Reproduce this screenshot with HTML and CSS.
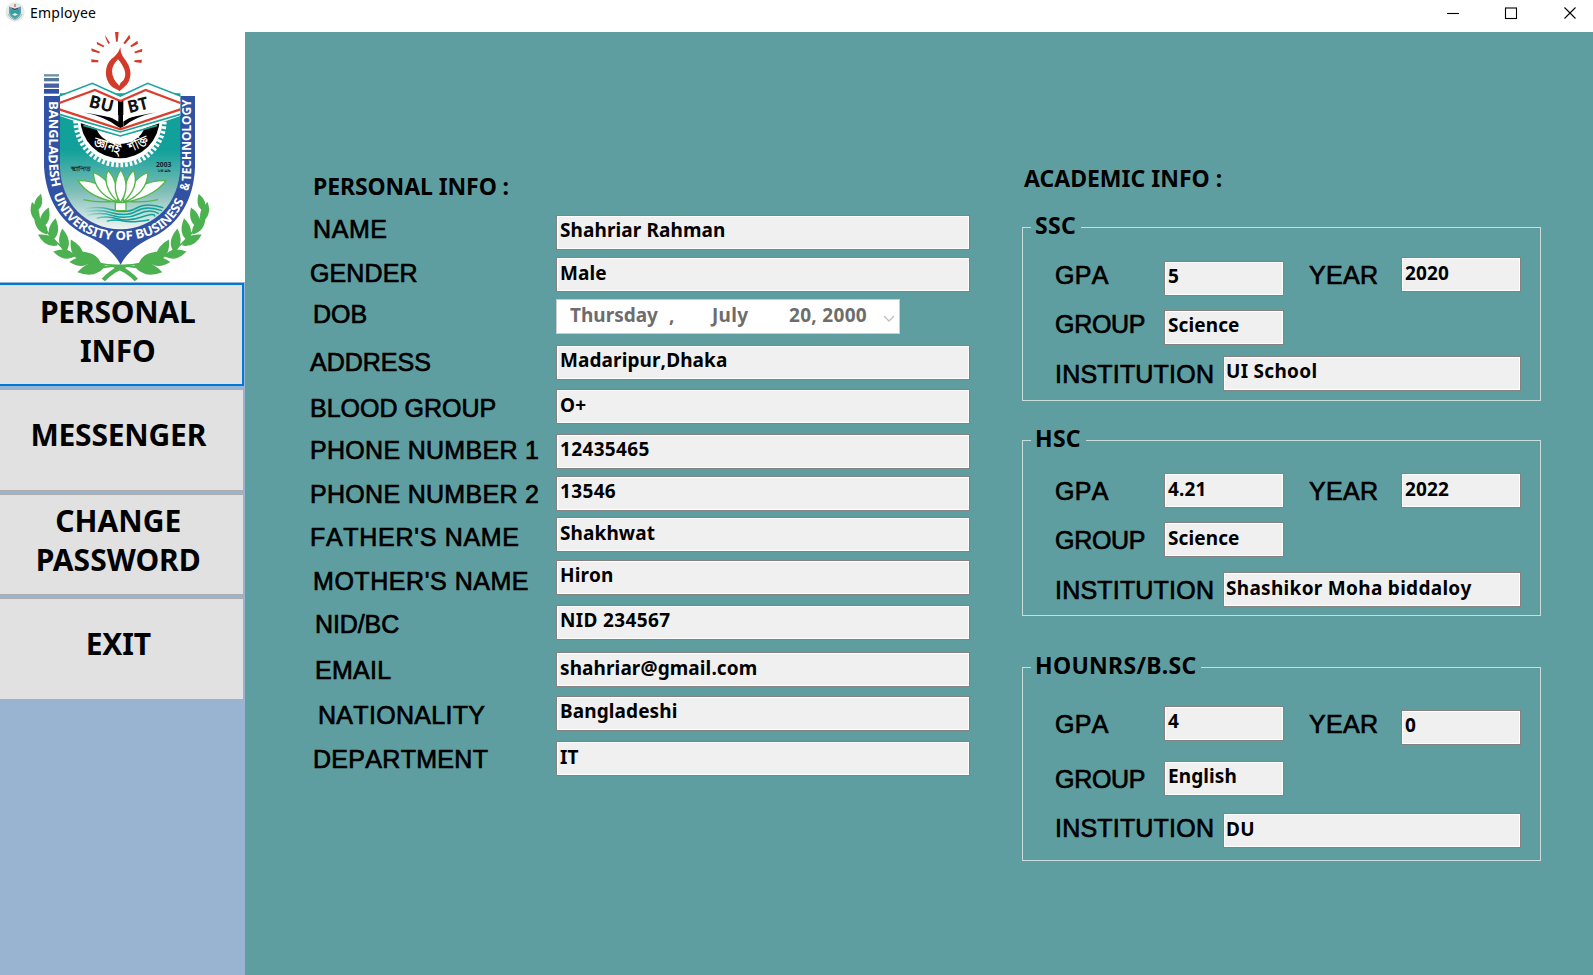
FILE: index.html
```html
<!DOCTYPE html>
<html lang="en">
<head>
<meta charset="utf-8">
<title>Employee</title>
<link rel="stylesheet" href="styles.css">
</head>
<body>
<header class="titlebar">
  <svg class="app-icon" viewBox="0 0 20 20"><circle cx="10" cy="10" r="9.700" fill="#e4ebea"/><path d="M4 4.500 5.500 5 10 6.500 16 4.500V11Q15 15 10 17.500 5 15 4 11Z" fill="#6a9ab4"/><path d="M5.500 7 10 9 14.500 7V11Q13 14 10 15 7 14 5.500 11Z" fill="#2fa39b"/><path d="M7 12.500 10 11 13 12.500 10 14Z" fill="#d5efe4"/><path d="M7 6.500 10 7.500 13 6.500" stroke="#39454a" fill="none"/><path d="M10 2V5" stroke="#d07060" stroke-width="1.500"/><path d="M3 12Q5 17 10 18 15 17 17 12" stroke="#8fc79a" fill="none"/></svg>
  <span class="app-title">Employee</span>
  <svg class="controls" viewBox="0 0 150 26" fill="none" stroke="#000" stroke-width="1.100"><path d="M4 13.500H16"/><rect x="62.500" y="8" width="11" height="10.500"/><path d="M121.500 7.500 132.500 18.500M132.500 7.500 121.500 18.500"/></svg>
</header>
<div class="body">
  <aside class="sidebar">
    <div class="logo">
      <svg class="crest" viewBox="0 96 735 753">
        <defs>
          <linearGradient id="water" x1="0" y1="0" x2="0" y2="1"><stop offset="0" stop-color="#12a19a"/><stop offset=".42" stop-color="#12a19a"/><stop offset=".72" stop-color="#7fbdb6"/><stop offset="1" stop-color="#eef5f3"/></linearGradient>
          <linearGradient id="ripple" gradientUnits="userSpaceOnUse" x1="250" y1="0" x2="490" y2="0"><stop offset="0" stop-color="#12a19a" stop-opacity="0"/><stop offset=".4" stop-color="#12a19a"/></linearGradient>
          <path id="band-left" d="M146 304V470Q147 530 159 570"/>
          <path id="band-bottom" d="M160 583C192 676 270 721 362 721 455 721 528 680 560 582"/>
          <path id="band-amp" d="M564 574 572 542"/>
          <path id="band-right" d="M572 544 574 500V290"/>
          <path id="leaf" d="M-1 3Q24-16 4-53-20-24-1 3Z"/>
          <g id="laurel">
            <path d="M112 640Q135 705 195 748 260 795 361 797 420 800 440 812" fill="none" stroke="#4cb150" stroke-width="5"/>
            <use href="#leaf" transform="translate(108 632) rotate(12)"/>
            <use href="#leaf" transform="translate(112 662) rotate(-20) scale(1.100)"/>
            <use href="#leaf" transform="translate(125 680) rotate(16) scale(1.150)"/>
            <use href="#leaf" transform="translate(140 700) rotate(-42) scale(1.150)"/>
            <use href="#leaf" transform="translate(155 720) rotate(6) scale(1.250)"/>
            <use href="#leaf" transform="translate(170 734) rotate(-66) scale(1.200)"/>
            <use href="#leaf" transform="translate(196 754) rotate(-12) scale(1.300)"/>
            <use href="#leaf" transform="translate(222 768) rotate(-82) scale(1.200)"/>
            <use href="#leaf" transform="translate(246 782) rotate(-32) scale(1.350)"/>
            <use href="#leaf" transform="translate(272 784) rotate(-96) scale(1.200)"/>
            <use href="#leaf" transform="translate(302 797) rotate(-62) scale(1.500)"/>
            <use href="#leaf" transform="translate(312 797) rotate(-108) scale(1.550)"/>
            <path d="M361 795Q330 810 305 836L315 844Q340 815 380 803Z"/>
          </g>
        </defs>
        <g fill="#4cb150"><use href="#laurel"/><use href="#laurel" transform="translate(719 0) scale(-1 1)"/></g>
        <path d="M132 288H585V500C582 600 535 672 465 708 425 726 385 750 362 794 338 750 300 726 262 708 185 672 138 600 132 500Z" fill="#3152a3"/>
        <path d="M180 280H541V500C538 610 465 685 361 688 257 685 183 610 180 500Z" fill="url(#water)"/>
        <path d="M132 226H177" stroke="#6d929c" stroke-width="7"/><path d="M132 239H177" stroke="#56789f" stroke-width="10"/><path d="M132 257H177" stroke="#4563a4" stroke-width="13"/><path d="M132 274H177" stroke="#3152a3" stroke-width="14"/>
        <path d="M227 362A133 133 0 0 0 493 362" fill="none" stroke="#fff" stroke-width="14" stroke-dasharray="8 6"/>
        <path d="M233 362A127 127 0 0 0 487 362Z" fill="#fff"/>
        <path d="M241 356A119 119 0 0 0 479 356Z" fill="#000"/>
        <path d="M286 370C288 408 325 432 360 432 397 432 433 408 436 370Z" fill="#fff"/>
        <path d="M180 288 277 248 361 287 443 248 541 288V348L361 410 180 348Z" fill="#fff"/>
        <path d="M178 288 277 250 361 288 443 250 541 288M178 343 361 396 541 343M250 376 361 408 472 376" fill="none" stroke="#19a49c" stroke-width="5"/>
        <path d="M178 309 285 270 361 303 437 270 541 309M178 328 361 388 541 328" fill="none" stroke="#dd3d2c" stroke-width="7"/>
        <path d="M354 302 361 306 370 302V380L361 384 354 380ZM250 337 355 356V381Q315 350 250 337ZM468 337 369 356V381Q405 350 468 337Z" fill="#000"/>
        <path d="M250 337Q315 339 355 365V345Q310 332 250 337ZM468 337Q410 339 369 365V345Q412 332 468 337Z" fill="#fff"/>
        <path d="M361 142Q354 164 334 177C314 196 311 235 333 257 344 268 353 267 359 274 364 266 379 260 387 243 402 208 377 182 368 169Q361 157 361 142ZM354 178C369 196 384 220 371 240Q360 248 358 257 337 239 336 214 336 196 354 178Z" fill="#d23b29" fill-rule="evenodd"/>
        <path d="M274 178 295 181V187L274 187ZM274 145 300 155 298 160 275 154ZM290 125 313 137 310 142 291 133ZM315 105 330 129 325 132 317 115ZM345 96H356L353 125H348ZM388 104 370 129 375 133 391 114ZM412 122 391 137 394 142 414 131ZM427 146 403 155 405 160 426 155ZM426 179 403 181V186L424 189Z" fill="#d23b29"/>
        <g class="crest-book"><text transform="translate(264 320) rotate(14)" textLength="74" lengthAdjust="spacingAndGlyphs">BU</text><text transform="translate(388 340) rotate(-14)" textLength="62" lengthAdjust="spacingAndGlyphs">BT</text></g>
        <g class="crest-motto"><text transform="translate(280 438) rotate(18)" textLength="82" lengthAdjust="spacingAndGlyphs">জ্ঞানই</text><text transform="translate(393 456) rotate(-24)" textLength="60" lengthAdjust="spacingAndGlyphs">শক্তি</text></g>
        <g class="crest-small"><text x="212" y="512" textLength="62" lengthAdjust="spacingAndGlyphs">স্থাপিত</text><text x="468" y="502" textLength="46" lengthAdjust="spacingAndGlyphs">2003</text><text class="crest-year" x="470" y="517" textLength="43" lengthAdjust="spacingAndGlyphs">১৪০৯</text></g>
        <g fill="none" stroke="url(#ripple)" stroke-width="4.500"><path d="M250 628Q290 616 335 629T410 624 490 623"/><path d="M250 637Q290 625 335 638T410 633 486 632"/><path d="M262 646Q300 635 340 647T415 642 476 641"/><path d="M290 655Q320 646 352 656T425 651 464 650"/><path d="M320 664Q345 657 370 663T448 659"/></g>
        <g fill="#fff" stroke="#54b54b" stroke-width="4" stroke-linejoin="round">
          <path d="M350 607Q310 540 234 542 265 592 350 607ZM374 607Q415 540 498 542 460 592 374 607Z"/>
          <path d="M352 607Q330 535 280 517 282 580 352 607ZM372 607Q395 535 444 517 442 580 372 607Z"/>
          <path d="M354 606Q350 530 323 512 305 560 354 606ZM370 606Q374 530 401 512 420 560 370 606Z"/>
          <path d="M361 608Q330 560 362 509 395 560 361 608Z"/>
          <path d="M346 632V608H378V632Z"/><path d="M250 599Q300 610 347 603M474 599Q425 610 378 603" fill="none"/>
        </g>
        <g class="crest-band"><text><textPath href="#band-left" textLength="260" lengthAdjust="spacingAndGlyphs">BANGLADESH</textPath></text><text><textPath href="#band-bottom" textLength="502" lengthAdjust="spacingAndGlyphs">UNIVERSITY OF BUSINESS</textPath></text><text><textPath href="#band-amp" textLength="23" lengthAdjust="spacingAndGlyphs">&amp;</textPath></text><text><textPath href="#band-right" textLength="246" lengthAdjust="spacingAndGlyphs">TECHNOLOGY</textPath></text></g>
      </svg>
    </div>
    <nav class="menu">
      <button class="menu-btn active">PERSONAL<br>INFO</button>
      <button class="menu-btn single">MESSENGER</button>
      <button class="menu-btn">CHANGE<br>PASSWORD</button>
      <button class="menu-btn single">EXIT</button>
    </nav>
  </aside>
  <main class="content">
    <section class="personal">
      <h2 class="heading">PERSONAL INFO :</h2>
      <div class="row r-name"><span class="label">NAME</span><div class="field">Shahriar Rahman</div></div>
      <div class="row r-gender"><span class="label">GENDER</span><div class="field">Male</div></div>
      <div class="row r-dob"><span class="label">DOB</span><div class="date"><span class="weekday">Thursday</span><span class="comma">,</span><span class="month">July</span><span class="day">20, 2000</span><svg class="chevron" viewBox="0 0 12 8"><path d="M1 1 6 6 11 1" fill="none" stroke="#bfbfbf" stroke-width="1.300"/></svg></div></div>
      <div class="row r-address"><span class="label">ADDRESS</span><div class="field">Madaripur,Dhaka</div></div>
      <div class="row r-blood"><span class="label">BLOOD GROUP</span><div class="field">O+</div></div>
      <div class="row r-phone1"><span class="label">PHONE NUMBER 1</span><div class="field numeric">12435465</div></div>
      <div class="row r-phone2"><span class="label">PHONE NUMBER 2</span><div class="field numeric">13546</div></div>
      <div class="row r-father"><span class="label">FATHER'S NAME</span><div class="field">Shakhwat</div></div>
      <div class="row r-mother"><span class="label">MOTHER'S NAME</span><div class="field">Hiron</div></div>
      <div class="row r-nid"><span class="label">NID/BC</span><div class="field numeric">NID 234567</div></div>
      <div class="row r-email"><span class="label">EMAIL</span><div class="field">shahriar@gmail.com</div></div>
      <div class="row r-nation"><span class="label">NATIONALITY</span><div class="field">Bangladeshi</div></div>
      <div class="row r-dept"><span class="label">DEPARTMENT</span><div class="field">IT</div></div>
    </section>
    <section class="academic">
      <h2 class="heading">ACADEMIC INFO :</h2>
      <fieldset class="group ssc">
        <legend>SSC</legend>
        <div class="line grades"><span class="label">GPA</span><div class="field">5</div><span class="label">YEAR</span><div class="field">2020</div></div>
        <div class="line stream"><span class="label">GROUP</span><div class="field">Science</div></div>
        <div class="line school"><span class="label">INSTITUTION</span><div class="field">UI School</div></div>
      </fieldset>
      <fieldset class="group hsc">
        <legend>HSC</legend>
        <div class="line grades"><span class="label">GPA</span><div class="field">4.21</div><span class="label">YEAR</span><div class="field">2022</div></div>
        <div class="line stream"><span class="label">GROUP</span><div class="field">Science</div></div>
        <div class="line school"><span class="label">INSTITUTION</span><div class="field">Shashikor Moha biddaloy</div></div>
      </fieldset>
      <fieldset class="group honours">
        <legend>HOUNRS/B.SC</legend>
        <div class="line grades"><span class="label">GPA</span><div class="field">4</div><span class="label">YEAR</span><div class="field">0</div></div>
        <div class="line stream"><span class="label">GROUP</span><div class="field">English</div></div>
        <div class="line school"><span class="label">INSTITUTION</span><div class="field">DU</div></div>
      </fieldset>
    </section>
  </main>
</div>
</body>
</html>
```
FILE: styles.css
```css
* { box-sizing: border-box; }
body {
  margin: 0;
  width: 1593px;
  height: 975px;
  overflow: hidden;
  background: #fff;
  color: #000;
  font-family: "Noto Sans", sans-serif;
}
.titlebar { display: flex; height: 32px; align-items: flex-start; }
.app-icon { width: 20px; height: 20px; margin: 2px 0 0 5px; }
.app-title { margin-left: 5px; font-size: 14px; line-height: 26px; letter-spacing: 0.25px; }
.controls { width: 150px; height: 26px; margin-left: auto; }

.body { display: flex; height: 943px; }
.sidebar { width: 245px; background: #99b4d1; }
.logo { height: 250px; background: #fff; }
.crest { display: block; width: 245px; height: 251px; }
.crest-book { font-weight: 700; font-size: 52px; fill: #111; }
.crest-motto { font-weight: 700; font-size: 40px; fill: #fff; }
.crest-small { font-weight: 700; font-size: 19px; fill: #123; }
.crest-year { font-size: 14px; }
.crest-band { font-weight: 700; font-size: 38px; fill: #fff; }

.menu { display: flex; flex-direction: column; gap: 3px; padding-top: 1px; }
.menu-btn {
  width: 243.5px;
  height: 101.6px;
  padding: 0 6px 8px 0;
  border: 1px solid #adadad;
  border-left: 0;
  background: #e1e1e1;
  color: #000;
  font: 700 30px/39px "Noto Sans", sans-serif;
  text-align: center;
  display: block;
}
.menu-btn.active { height: 103px; border: 2px solid #0078d7; border-left: 0; letter-spacing: -0.2px; }
.menu-btn.single { padding-bottom: 10px; letter-spacing: -0.2px; }

.content { display: flex; flex: 1; background: #5f9ea0; }
.heading, legend { margin: 0; font-size: 23px; font-weight: 700; line-height: 30px; }
.label {
  font-family: "Liberation Sans", Arial, sans-serif;
  font-size: 25px;
  line-height: 34px;
  font-kerning: none;
  letter-spacing: 0.3px;
  white-space: nowrap;
  -webkit-text-stroke: 0.7px #000;
}
.field {
  height: 35px;
  padding: 2px 2px 0 3px;
  border: 1px solid #828282;
  background: #f0f0f0;
  box-shadow: inset 0 0 0 1px #fff;
  font-size: 19px;
  font-weight: 700;
  line-height: 26px;
  letter-spacing: 0.1px;
  font-kerning: none;
  white-space: nowrap;
}
.field.numeric { letter-spacing: 0.35px; }

.personal { width: 725px; padding: 139px 0 0 65px; }
.personal .heading { margin-left: 3px; height: 44px; letter-spacing: -0.1px; }
.row { display: grid; grid-template-columns: 246px 414px; align-items: start; }
.r-name { height: 42px; }
.r-name .label { margin: -3px 0 0 3px; letter-spacing: 0.6px; }
.r-gender { height: 42px; }
.r-gender .label { margin-top: -1px; letter-spacing: 0.1px; }
.r-dob { height: 46px; }
.r-dob .label { margin: -2px 0 0 3px; letter-spacing: 0; }
.r-address { height: 44px; }
.r-address .label { margin-top: 0; letter-spacing: 0; }
.r-blood { height: 45px; }
.r-blood .label { margin-top: 2px; letter-spacing: 0; }
.r-phone1 { height: 42px; }
.r-phone1 .label { margin-top: -1px; }
.r-phone2 { height: 41px; }
.r-phone2 .label { margin-top: 1px; }
.r-father { height: 43px; }
.r-father .label { margin-top: 3px; letter-spacing: 0.7px; }
.r-mother { height: 45px; }
.r-mother .label { margin: 4px 0 0 3px; letter-spacing: 0.55px; }
.r-nid { height: 47px; }
.r-nid .label { margin: 2px 0 0 5px; letter-spacing: -0.1px; }
.r-email { height: 44px; }
.r-email .label { margin: 1px 0 0 5px; }
.r-nation { height: 45px; }
.r-nation .label { margin: 2px 0 0 8px; }
.r-dept .label { margin: 1px 0 0 3px; }
.r-name .field,
.r-address .field,
.r-phone1 .field,
.r-phone2 .field,
.r-mother .field,
.r-nid .field,
.r-nation .field { padding-top: 1px; }

.date {
  display: grid;
  grid-template-columns: 99px 43px 77px 94px 12px;
  width: 344px;
  height: 35px;
  padding: 2px 0 0 13px;
  border: 1px solid #ccc;
  background: #fff;
  color: #6d6d6d;
  font-size: 19px;
  font-weight: 700;
  line-height: 26px;
  white-space: nowrap;
}
.day, .month { letter-spacing: 0.3px; }
.chevron { width: 12px; height: 8px; margin-top: 13px; }

.academic { padding-top: 131px; width: 572px; padding-left: 52px; }
.academic .heading { height: 47px; padding-left: 2px; }
.group {
  width: 519px;
  min-width: 0;
  margin: 0;
  padding: 0 0 0 32px;
  border: 1px solid #cbdcdc;
}
legend { margin-left: -24px; padding: 0 5px 5px 4px; letter-spacing: 0.3px; }
.ssc { height: 191px; margin-bottom: 22px; }
.hsc { height: 193px; margin-bottom: 34px; }
.honours { height: 211px; }
.line { display: grid; align-items: start; }
.line .label { margin-top: 1px; }
.grades { grid-template-columns: 109px 145px 92px 120px; }
.grades .field { width: 120px; }
.stream { grid-template-columns: 109px 120px; }
.stream .label { letter-spacing: -0.3px; }
.school { grid-template-columns: 168px 298px; }
.school .label { letter-spacing: 0.2px; }
.school .field { padding-left: 2px; letter-spacing: 0.3px; }
.ssc .grades { margin-top: 12px; height: 51px; }
.ssc .grades .field:nth-child(2) { margin-top: 4px; padding-top: 1px; }
.ssc .stream { height: 48px; }
.ssc .stream .label { margin-top: -1px; }
.ssc .stream .field { margin-top: 2px; padding-top: 1px; }
.ssc .school .field { padding-top: 1px; }
.hsc .grades { margin-top: 15px; height: 49px; }
.hsc .stream { height: 50px; }
.honours .grades { margin-top: 21px; height: 55px; }
.honours .grades .field { padding-top: 1px; }
.honours .grades .field:nth-child(4) { margin-top: 4px; }
.honours .stream { height: 50px; }
.honours .stream .field { padding-top: 1px; }
.honours .school .label { margin-top: 0; }
.honours .school .field { margin-top: 2px; }
```
